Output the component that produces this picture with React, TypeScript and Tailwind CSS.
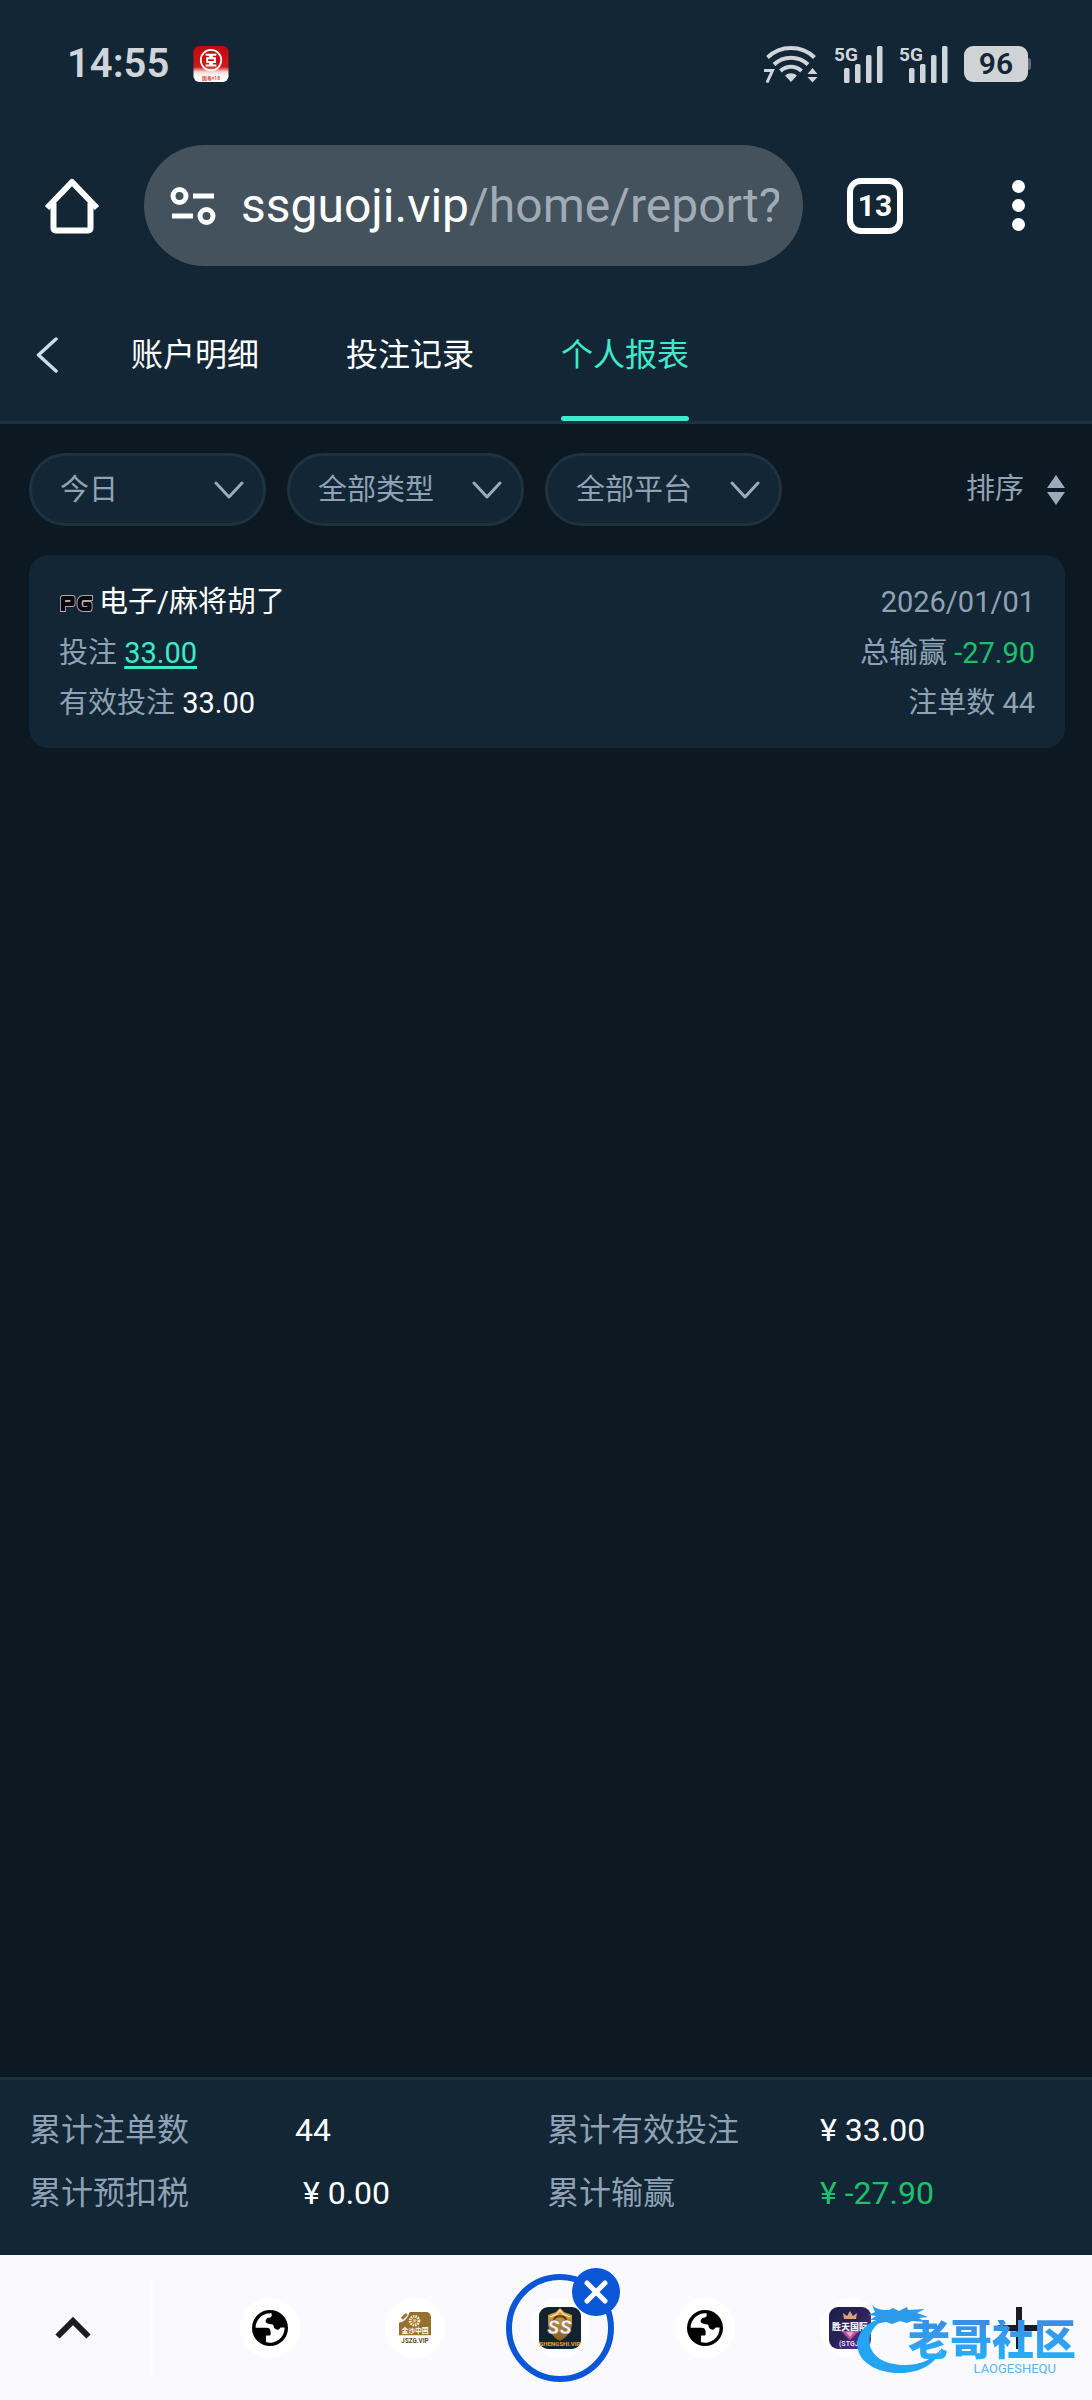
import { Fragment, ReactNode } from 'react';

const tabs = [
  { label: '账户明细', active: false },
  { label: '投注记录', active: false },
  { label: '个人报表', active: true },
];

const filters = ['今日', '全部类型', '全部平台'];

const totals = [
  { label: '累计注单数', value: '44', className: 'text-white' },
  { label: '累计有效投注', value: '¥ 33.00', className: 'text-white' },
  { label: '累计预扣税', value: '\u00a0¥ 0.00', className: 'text-white' },
  { label: '累计输赢', value: '¥ -27.90', className: 'text-[#1fc06c]' },
];

function BankAppIcon() {
  return (
    <svg viewBox="0 0 36 37" className="w-9 h-9">
      <defs>
        <linearGradient id="bank" x1="0" y1="0" x2="0" y2="1">
          <stop offset="0" stopColor="#c4060f" />
          <stop offset="0.58" stopColor="#cf1a1a" />
          <stop offset="0.72" stopColor="#f7d9d0" />
          <stop offset="0.85" stopColor="#ffffff" />
        </linearGradient>
      </defs>
      <rect width="36" height="37" rx="6" fill="url(#bank)" />
      <circle cx="18" cy="14.500" r="10.500" fill="none" stroke="#fff" strokeWidth="1.800" />
      <path d="M12.500 9h4.500v3.500h-3v4h3V20h-4.500M23.500 9H19v3.500h3v4h-3V20h4.500" fill="none" stroke="#fff" strokeWidth="2" />
      <text x="18" y="35" textAnchor="middle" fontSize="5" fontWeight="700" fill="#d0482c" fontFamily="Roboto, 'Noto Sans CJK SC', sans-serif">国寿×18</text>
    </svg>
  );
}

function WifiIcon() {
  return (
    <svg viewBox="0 0 54 38" className="w-[54px] h-[38px]" fill="none" stroke="#cfd5db" strokeWidth="4">
      <path d="M3.500 12.500a34 34 0 0 1 47 0" />
      <path d="M10 19.500a24.500 24.500 0 0 1 34 0" />
      <path d="M16.500 26a15 15 0 0 1 21 0" />
      <path d="M27 37l-6-6.500a9 9 0 0 1 12 0z" fill="#cfd5db" stroke="none" />
      <path d="M48.500 23l5 6h-10zM48.500 37.500l5-5.500h-10z" fill="#cfd5db" stroke="none" />
      <path d="M0 25.500h8.500L3 37.500" strokeWidth="3" />
    </svg>
  );
}

function SignalIcon() {
  return (
    <svg viewBox="0 0 49 38" className="w-[49px] h-[38px] overflow-visible" fill="#cfd5db">
      <text x="0" y="16" fontSize="19" fontWeight="700" fontFamily="Roboto, sans-serif">5G</text>
      <rect x="10" y="23" width="5.500" height="15" rx="1.500" />
      <rect x="21" y="19" width="5.500" height="19" rx="1.500" />
      <rect x="32" y="10" width="5.500" height="28" rx="1.500" />
      <rect x="43" y="1" width="5.500" height="37" rx="1.500" />
    </svg>
  );
}

function HomeIcon() {
  return (
    <svg viewBox="0 0 56 56" className="w-14 h-14" fill="none" stroke="#fff" strokeWidth="6" strokeLinejoin="round">
      <path d="M3 30L28 4l25 26" />
      <path d="M9.500 25v25.500a2 2 0 0 0 2 2h33a2 2 0 0 0 2-2V25" />
    </svg>
  );
}

function SiteSettingsIcon() {
  return (
    <svg viewBox="0 0 46 38" className="w-[46px] h-[38px]" fill="none" stroke="#fff" strokeWidth="5">
      <circle cx="9.500" cy="9" r="6.500" />
      <path d="M23 9h21M2 29h21" />
      <circle cx="36.500" cy="29" r="6.500" />
    </svg>
  );
}

function PgLogo() {
  return (
    <svg viewBox="0 0 36 20" className="w-9 h-5 mr-1" fill="none" strokeLinecap="square" strokeLinejoin="round">
      <g stroke="#b9a4aa" strokeWidth="6">
        <path d="M4 16V5h9.500v6H6M31 5h-6.500c-3 0-4 2-4 5.500s1 5.500 4 5.500h6v-5h-4" />
      </g>
      <g stroke="#07090f" strokeWidth="4.200">
        <path d="M4 16V5h9.500v6H6M31 5h-6.500c-3 0-4 2-4 5.500s1 5.500 4 5.500h6v-5h-4" />
      </g>
    </svg>
  );
}

function GlobeIcon() {
  return (
    <svg viewBox="0 0 24 24" className="w-9 h-9">
      <circle cx="12" cy="12" r="12" fill="#000" />
      <path
        d="M2.400 11.800A9.700 9.700 0 0 1 13.100 2.200V4c-.4 1.100-1.600 1.200-2.900 1.300-.6 1-1.600 1.500-.9 2.800.6 1.200 2.800 1.100 4.500 1.500.9.400.5 1.900 1.200 2.600.7.500 1.200.9 2.100.9 1.300 0 1.400-1.500 2.200-1.500h2.400A9.700 9.700 0 0 1 9.300 21.400v-2.900c0-1.100 0-1.500.5-1.500h1.600c1 0 1-.4 1-1v-1.500c0-1.600-.9-2.700-2.700-2.700z"
        fill="#fff"
      />
    </svg>
  );
}

function JszgIcon() {
  return (
    <svg viewBox="0 0 33 33" className="w-8 h-8">
      <rect width="33" height="33" rx="5" fill="#fff" />
      <path d="M11 0h17a5 5 0 0 1 5 5v19H0V11C6 10 9 6 11 0z" fill="#96702f" />
      <path d="M3 7l5-5" stroke="#96702f" strokeWidth="3" />
      <circle cx="16" cy="9" r="4.500" fill="none" stroke="#f3e6c8" strokeWidth="3" strokeDasharray="1.600 .8" />
      <circle cx="16" cy="9" r="2" fill="#d8b978" />
      <text x="16.500" y="22" textAnchor="middle" fontSize="7" fontWeight="700" fill="#fff" fontFamily="'Noto Sans CJK SC', sans-serif">金沙中国</text>
      <text x="16.500" y="31.500" textAnchor="middle" fontSize="6.500" fontWeight="700" fill="#5d4519" fontFamily="Roboto, sans-serif">JSZG.VIP</text>
    </svg>
  );
}

function SsIcon() {
  return (
    <svg viewBox="0 0 42 42" className="w-[42px] h-[42px]">
      <defs>
        <linearGradient id="ssGold" x1="0" y1="0" x2="0" y2="1">
          <stop offset="0" stopColor="#e3a93c" />
          <stop offset="1" stopColor="#8a5a1b" />
        </linearGradient>
      </defs>
      <rect width="42" height="42" rx="9" fill="#13222e" />
      <path d="M21 1l4 4 8 3v8c0 8-5 14-12 18C14 30 9 24 9 16V8l8-3z" fill="url(#ssGold)" />
      <path d="M21 3l3 4 7 3M21 3l-3 4-7 3" fill="none" stroke="#f5ead0" strokeWidth="1.200" />
      <path d="M15 13c1-5 11-5 12 0" fill="none" stroke="#5c3c10" strokeWidth="2" />
      <text x="20.500" y="27" textAnchor="middle" fontSize="20" fontWeight="900" fontStyle="italic" fill="#f1efef" stroke="#6b6d73" strokeWidth=".4" fontFamily="Roboto, sans-serif">SS</text>
      <text x="21" y="39" textAnchor="middle" fontSize="6" fontWeight="900" fill="#e09a2e" fontFamily="Roboto, sans-serif">SHENGSHI.VIP</text>
    </svg>
  );
}

function StgjIcon() {
  return (
    <svg viewBox="0 0 42 42" className="w-[42px] h-[42px]">
      <defs>
        <linearGradient id="stgj" x1="0" y1="0" x2="1" y2="1">
          <stop offset="0" stopColor="#1a2148" />
          <stop offset="0.5" stopColor="#2c2257" />
          <stop offset="1" stopColor="#6a3aa4" />
        </linearGradient>
      </defs>
      <rect width="42" height="42" rx="9" fill="url(#stgj)" />
      <path d="M15 12l-1-6 4 3 3-5 3 5 4-3-1 6z" fill="#d9a27f" />
      <path d="M12 24h18l-9 9z" fill="#c24a9c" />
      <path d="M17 25h8l-4 5z" fill="#f0a0c8" />
      <text x="21" y="23" textAnchor="middle" fontSize="9" fontWeight="900" fill="#f4f0ff" fontFamily="'Noto Sans CJK SC', sans-serif">胜天国际</text>
      <text x="21" y="39" textAnchor="middle" fontSize="7" fontWeight="700" fill="#e9dcf8" fontFamily="Roboto, sans-serif">(STGJ)</text>
    </svg>
  );
}

function Watermark() {
  return (
    <div className="absolute right-4 bottom-6 w-[220px] h-[72px] pointer-events-none">
      <svg viewBox="0 0 220 72" className="absolute inset-0 w-full h-full">
        <path
          d="M34 12C12 15-2 30 2 46c4 15 22 23 42 23 20 0 36-9 42-25-9 11-21 17-37 17-17 0-31-6-35-19-3-12 5-23 20-30z"
          fill="#22a6f2"
        />
        <path
          d="M16 1c5 5 12 5 17 5l4-2 6 3 8-4 1 3 17-1-8 4 11 4-9 1 6 4-13-1-5 2-7-2-8 3-6-2-11 2 5-4-10 0 6-4-8-1 7-3z"
          fill="#2c9bea"
        />
      </svg>
      <div className="relative pt-4 flex flex-col items-end">
        <span className="text-[42px] leading-[42px] font-black text-transparent bg-clip-text bg-gradient-to-b from-[#3a8de4] to-[#1fb2fa]">
          老哥社区
        </span>
        <span className="pr-5 text-[13px] leading-[14px] text-[#5db4ee]">LAOGESHEQU</span>
      </div>
    </div>
  );
}

function Favicon({ label, children }: { label: string; children: ReactNode }) {
  return (
    <button type="button" aria-label={label} className="w-[145px] flex justify-center">
      <span className="w-[60px] h-[60px] rounded-full bg-white flex items-center justify-center">{children}</span>
    </button>
  );
}

function StatusBar() {
  return (
    <div className="h-32 pl-[67px] pr-[61px] flex items-center justify-between">
      <div className="flex items-center gap-6">
        <span className="text-[40px] leading-10 font-semibold text-[#cfd5db]">14:55</span>
        <BankAppIcon />
      </div>
      <div className="flex items-center gap-4">
        <WifiIcon />
        <SignalIcon />
        <SignalIcon />
        <div className="flex items-center">
          <span className="w-16 h-9 rounded-[9px] bg-[#cfd3d6] text-[#132635] text-[30px] leading-9 font-semibold text-center">96</span>
          <span className="w-[3px] h-3 rounded-r bg-[#5d6a75]" />
        </div>
      </div>
    </div>
  );
}

function BrowserBar() {
  return (
    <div className="h-[165px] pt-[17px] pb-[27px] pl-11 pr-16 flex items-center">
      <button type="button" aria-label="主页">
        <HomeIcon />
      </button>
      <label className="ml-11 h-[121px] flex-1 min-w-0 rounded-full bg-[#43525d] pl-[26px] pr-6 flex items-center text-[48px] text-white">
        <SiteSettingsIcon />
        <span className="ml-[25px]">ssguoji.vip</span>
        <input
          type="text"
          aria-label="网址"
          defaultValue="/home/report?"
          className="flex-1 min-w-0 bg-transparent text-[#a1abb5] outline-none"
        />
      </label>
      <button
        type="button"
        aria-label="标签页"
        className="ml-11 w-14 h-14 rounded-[14px] border-[6px] border-white text-white text-[30px] leading-none font-bold"
      >
        13
      </button>
      <button type="button" aria-label="更多" className="ml-[105px] w-5 flex flex-col items-center gap-[6px]">
        <span className="w-[13px] h-[13px] rounded-full bg-white" />
        <span className="w-[13px] h-[13px] rounded-full bg-white" />
        <span className="w-[13px] h-[13px] rounded-full bg-white" />
      </button>
    </div>
  );
}

function PageHeader() {
  return (
    <header className="h-[131px] pl-9 flex items-stretch border-b-[3px] border-[#1e3240]">
      <button type="button" aria-label="返回" className="w-[95px] pb-1">
        <svg viewBox="0 0 22 36" className="w-[22px] h-9" fill="none" stroke="#c9dcec" strokeWidth="3.500" strokeLinecap="round" strokeLinejoin="round">
          <path d="M20 2L2.500 18 20 34" />
        </svg>
      </button>
      <nav className="flex gap-[87px]">
        {tabs.map((tab) => (
          <a
            key={tab.label}
            href="#"
            className={
              tab.active
                ? 'flex flex-col justify-between text-[32px] leading-10 pt-[42px] text-[#3eeacb]'
                : 'flex flex-col justify-between text-[32px] leading-10 pt-[42px] text-white'
            }
          >
            {tab.label}
            {tab.active && <span className="h-[5px] rounded-full bg-[#3eeacb]" />}
          </a>
        ))}
      </nav>
    </header>
  );
}

function FilterSelect({ label }: { label: string }) {
  return (
    <div className="relative">
      <select
        aria-label={label}
        className="w-[237px] h-[73px] appearance-none rounded-full border-[3px] border-[#1e3240] bg-[#132635] pl-7 pt-[2px] text-[29px] text-[#8fa2b5]"
      >
        <option>{label}</option>
      </select>
      <svg viewBox="0 0 30 18" className="absolute right-[22px] top-7 w-[30px] h-[18px] pointer-events-none" fill="none" stroke="#9aabbb" strokeWidth="3" strokeLinecap="round" strokeLinejoin="round">
        <path d="M2 2l13 14L28 2" />
      </svg>
    </div>
  );
}

function RecordCard() {
  return (
    <article className="mt-[29px] rounded-[20px] bg-[#132635] px-[30px] pt-[22px] pb-[19px] text-[29px] text-[#8fa2b5]">
      <div className="h-[52px] flex items-center justify-between">
        <h2 className="flex items-center text-white">
          <PgLogo />
          电子/麻将胡了
        </h2>
        <time>2026/01/01</time>
      </div>
      <div className="h-[50px] flex items-center justify-between">
        <p>
          投注 <a href="#" className="text-[#3eeacb] underline underline-offset-3 decoration-[3px]">33.00</a>
        </p>
        <p>
          总输赢 <span className="text-[#1fc06c]">-27.90</span>
        </p>
      </div>
      <div className="h-[50px] flex items-center justify-between">
        <p>
          有效投注 <span className="text-white">33.00</span>
        </p>
        <p>注单数 44</p>
      </div>
    </article>
  );
}

function TabStrip() {
  return (
    <footer className="relative h-[145px] bg-[#f9f9fe] flex items-center justify-between">
      <div className="flex items-center">
        <button type="button" aria-label="展开" className="w-[145px] flex justify-center">
          <svg viewBox="0 0 36 22" className="w-9 h-[22px]" fill="none" stroke="#1b1b21" strokeWidth="6">
            <path d="M2.500 19.500L18 4l15.500 15.500" />
          </svg>
        </button>
        <span className="ml-[5px] mr-11 w-[3px] h-24 bg-[#fdfdff]" />
        <Favicon label="标签页 1">
          <GlobeIcon />
        </Favicon>
        <Favicon label="标签页 2">
          <JszgIcon />
        </Favicon>
        <div className="w-[145px] flex justify-center">
          <div className="relative w-[108px] h-[108px] rounded-full border-[6px] border-[#0a56d6] flex items-center justify-center">
            <span className="w-[60px] h-[60px] rounded-full bg-white flex items-center justify-center">
              <SsIcon />
            </span>
            <button
              type="button"
              aria-label="关闭"
              className="absolute -right-3 -top-3 w-12 h-12 rounded-full bg-[#0a56d6] flex items-center justify-center"
            >
              <svg viewBox="0 0 24 24" className="w-6 h-6" stroke="#fff" strokeWidth="5" strokeLinecap="round">
                <path d="M3 3l18 18M21 3L3 21" />
              </svg>
            </button>
          </div>
        </div>
        <Favicon label="标签页 3">
          <GlobeIcon />
        </Favicon>
        <Favicon label="标签页 4">
          <StgjIcon />
        </Favicon>
      </div>
      <button type="button" aria-label="新标签页" className="mr-[52px]">
        <svg viewBox="0 0 42 42" className="w-[42px] h-[42px]" stroke="#1b1b21" strokeWidth="6">
          <path d="M21 0v42M0 21h42" />
        </svg>
      </button>
      <Watermark />
    </footer>
  );
}

export default function App() {
  return (
    <div className="min-h-screen flex flex-col bg-[#0c1922] font-[Roboto,'Noto_Sans_CJK_SC',sans-serif]">
      <div className="bg-[#132635]">
        <StatusBar />
        <BrowserBar />
        <PageHeader />
      </div>

      <main className="flex-1 pt-[29px] pl-[29px] pr-[27px]">
        <div className="flex items-center justify-between">
          <div className="flex gap-[21px]">
            {filters.map((label) => (
              <FilterSelect key={label} label={label} />
            ))}
          </div>
          <button type="button" className="flex items-center gap-[23px] text-[29px] text-[#8fa2b5]">
            排序
            <svg viewBox="0 0 18 30" className="w-[18px] h-[30px]" fill="#9aabbb">
              <path d="M9 0l9 13H0zM9 30l9-13H0z" />
            </svg>
          </button>
        </div>
        <RecordCard />
      </main>

      <section className="h-[178px] pt-[18px] px-[29px] border-t-[3px] border-[#1e3240] bg-[#132635]">
        <dl className="grid grid-cols-[266fr_252fr_273fr_243fr] auto-rows-[63px] items-center text-[32px]">
          {totals.map((item) => (
            <Fragment key={item.label}>
              <dt className="text-[#8fa2b5]">{item.label}</dt>
              <dd className={item.className}>{item.value}</dd>
            </Fragment>
          ))}
        </dl>
      </section>

      <TabStrip />
    </div>
  );
}
